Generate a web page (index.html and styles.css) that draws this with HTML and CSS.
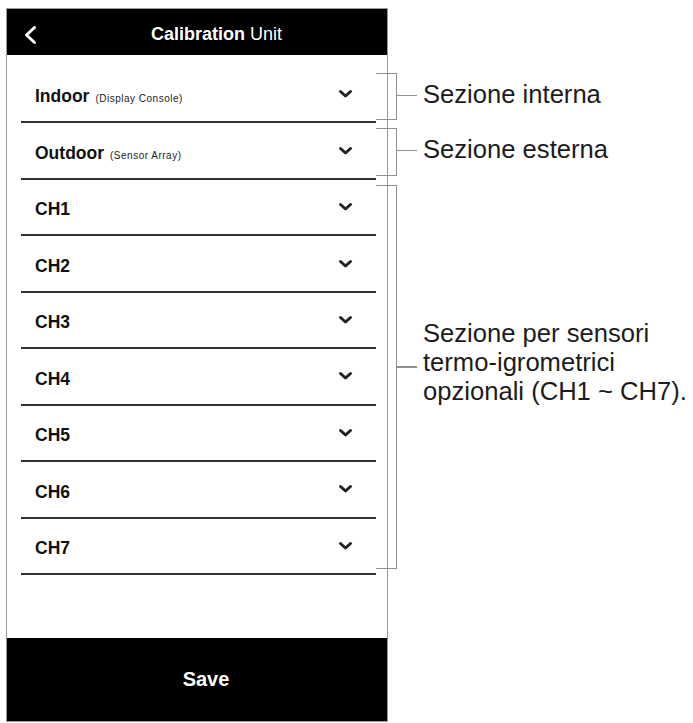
FILE: index.html
```html
<!DOCTYPE html>
<html lang="it">
<head>
  <meta charset="UTF-8" />
  <meta name="viewport" content="width=device-width, initial-scale=1" />
  <title>Calibration Unit</title>
  <link rel="stylesheet" href="styles.css">
</head>
<body>
  <div class="page">
    <div class="phone">
      <header class="topbar">
        <svg class="back" width="14" height="20" viewBox="0 0 14 20">
          <polyline points="11.5,2.5 3.5,10 11.5,17.5" fill="none" stroke="#fff" stroke-width="3" stroke-linecap="round" stroke-linejoin="round" />
        </svg>
        <h1 class="title"><b>Calibration</b> Unit</h1>
      </header>

      <main class="content">
        <ul class="units">
          <li class="unit">
            <span class="unit-name">Indoor<small>(Display Console)</small></span>
            <svg class="chevron" width="15" height="10" viewBox="0 0 15 10"><polyline points="2.5,2.5 7.5,7 12.5,2.5" /></svg>
          </li>
          <li class="unit">
            <span class="unit-name">Outdoor<small>(Sensor Array)</small></span>
            <svg class="chevron" width="15" height="10" viewBox="0 0 15 10"><polyline points="2.5,2.5 7.5,7 12.5,2.5" /></svg>
          </li>
          <li class="unit">
            <span class="unit-name">CH1</span>
            <svg class="chevron" width="15" height="10" viewBox="0 0 15 10"><polyline points="2.5,2.5 7.5,7 12.5,2.5" /></svg>
          </li>
          <li class="unit">
            <span class="unit-name">CH2</span>
            <svg class="chevron" width="15" height="10" viewBox="0 0 15 10"><polyline points="2.5,2.5 7.5,7 12.5,2.5" /></svg>
          </li>
          <li class="unit">
            <span class="unit-name">CH3</span>
            <svg class="chevron" width="15" height="10" viewBox="0 0 15 10"><polyline points="2.5,2.5 7.5,7 12.5,2.5" /></svg>
          </li>
          <li class="unit">
            <span class="unit-name">CH4</span>
            <svg class="chevron" width="15" height="10" viewBox="0 0 15 10"><polyline points="2.5,2.5 7.5,7 12.5,2.5" /></svg>
          </li>
          <li class="unit">
            <span class="unit-name">CH5</span>
            <svg class="chevron" width="15" height="10" viewBox="0 0 15 10"><polyline points="2.5,2.5 7.5,7 12.5,2.5" /></svg>
          </li>
          <li class="unit">
            <span class="unit-name">CH6</span>
            <svg class="chevron" width="15" height="10" viewBox="0 0 15 10"><polyline points="2.5,2.5 7.5,7 12.5,2.5" /></svg>
          </li>
          <li class="unit">
            <span class="unit-name">CH7</span>
            <svg class="chevron" width="15" height="10" viewBox="0 0 15 10"><polyline points="2.5,2.5 7.5,7 12.5,2.5" /></svg>
          </li>
        </ul>
      </main>

      <button class="save" type="button">Save</button>
    </div>

    <div class="notes">
      <div class="bracket bracket-indoor">
        <span class="bracket-line"></span>
        <span class="tick"></span>
        <p class="note">Sezione interna</p>
      </div>
      <div class="bracket bracket-outdoor">
        <span class="bracket-line"></span>
        <span class="tick"></span>
        <p class="note">Sezione esterna</p>
      </div>
      <div class="bracket bracket-channels">
        <span class="bracket-line"></span>
        <span class="tick"></span>
        <p class="note">Sezione per sensori<br>termo-igrometrici<br>opzionali (CH1 ~ CH7).</p>
      </div>
    </div>
  </div>
</body>
</html>
```

FILE: styles.css
```css
body {
  margin: 0;
  background: #fff;
  font-family: "Liberation Sans", Arial, sans-serif;
  color: #111;
}

.page {
  display: flex;
  align-items: flex-start;
  padding: 8px 0 0 6px;
}

/* phone screen */
.phone {
  flex-shrink: 0;
  width: 382px;
  height: 714px;
  box-sizing: border-box;
  border: 1px solid #9a9a9a;
  display: flex;
  flex-direction: column;
}

.topbar {
  height: 46px;
  background: #000;
  color: #fff;
  display: flex;
  align-items: center;
  padding-left: 16px;
}

.back {
  margin-top: 5px;
  flex-shrink: 0;
}

.title {
  flex: 1;
  margin: 0;
  padding: 4px 0 0 9px;
  font-size: 18px;
  font-weight: normal;
  text-align: center;
}

.content {
  flex: 1;
  padding: 12px 11.5px 0 14px;
}

.units {
  list-style: none;
  margin: 0;
  padding: 0;
}

.unit {
  height: 56.44px;
  box-sizing: border-box;
  border-bottom: 2px solid #333;
  display: flex;
  align-items: center;
  justify-content: space-between;
  padding: 0 22.5px 0 14px;
}

.unit-name {
  margin-top: 5.5px;
  font-size: 17.5px;
  font-weight: bold;
}

.unit-name small {
  margin-left: 6px;
  font-size: 10px;
  font-weight: normal;
  letter-spacing: 0.5px;
  color: #222;
}

.chevron polyline {
  fill: none;
  stroke: #222;
  stroke-width: 3;
  stroke-linecap: round;
  stroke-linejoin: round;
}

.save {
  display: block;
  width: 100%;
  height: 83px;
  border: none;
  background: #000;
  color: #fff;
  font-family: inherit;
  font-size: 20px;
  font-weight: bold;
  padding: 0 0 0 18px;
}

/* annotations on the right */
.notes {
  margin: 64.5px 0 0 -12px;
  display: flex;
  flex-direction: column;
}

.bracket {
  display: flex;
  align-items: center;
}

.bracket-indoor {
  height: 47.5px;
  margin-bottom: 7.5px;
}

.bracket-outdoor {
  height: 48px;
  margin-bottom: 9px;
}

.bracket-channels {
  height: 384.5px;
}

.bracket-line {
  align-self: stretch;
  width: 21px;
  box-sizing: border-box;
  border: 1.5px solid #8f8f8f;
  border-left: none;
}

.tick {
  width: 20px;
  height: 1.5px;
  margin-bottom: 2px;
  background: #8f8f8f;
}

.note {
  margin: 0 0 4.5px 6px;
  font-size: 25.6px;
  line-height: 29px;
  white-space: nowrap;
  color: #1c1c1c;
}

.bracket-channels .tick {
  margin-bottom: 20px;
}

.bracket-channels .note {
  margin-bottom: 29px;
}
```
